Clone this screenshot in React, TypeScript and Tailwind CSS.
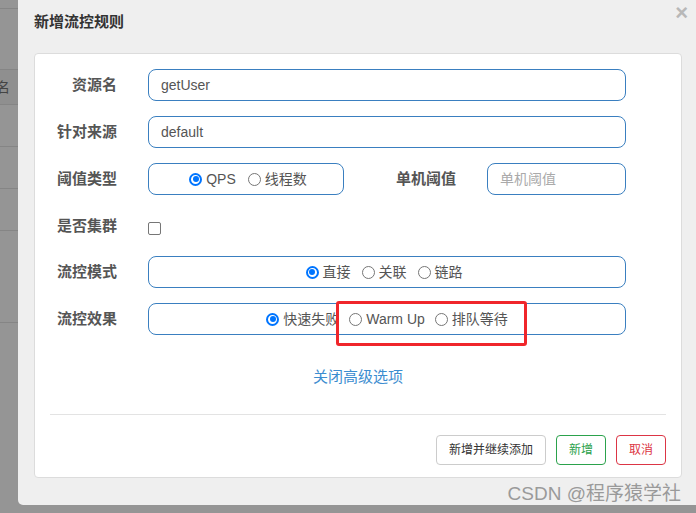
import React from 'react';

// Flow-control rule dialog (Sentinel dashboard), shown over a dimmed table.

const FONT = '"Liberation Sans", "Noto Sans CJK SC", sans-serif';

function Radio({ checked, label }: { checked?: boolean; label: string }) {
  return (
    <span className="flex items-center gap-[4px]">
      {checked ? (
        <span className="w-[13px] h-[13px] rounded-full border-2 border-[#0075ff] flex items-center justify-center">
          <span className="w-[6px] h-[6px] rounded-full bg-[#0075ff]" />
        </span>
      ) : (
        <span className="w-[13px] h-[13px] rounded-full border border-[#767676] bg-white" />
      )}
      <span>{label}</span>
    </span>
  );
}

function Label({ children }: { children: React.ReactNode }) {
  return <div className="w-[82px] text-right font-bold text-[#555] text-[15px]">{children}</div>;
}

const boxCls = 'h-[32px] rounded-[8px] border border-[#3a7fc0] bg-white';

export default function App() {
  return (
    <div className="relative w-[696px] h-[513px] bg-[#959595] flex overflow-hidden" style={{ fontFamily: FONT }}>
      {/* dimmed table behind the dialog */}
      <div className="w-[18px] flex flex-col text-[#444] text-[14px]">
        <div className="h-[9px] border-b border-[#858585]" />
        <div className="h-[61px] border-b border-[#858585]" />
        <div className="h-[35px] bg-[#8f8f8f] border-b border-[#858585] flex items-center overflow-hidden">
          <span className="-ml-[4px]">名</span>
        </div>
        <div className="h-[42px] border-b border-[#858585]" />
        <div className="h-[42px] border-b border-[#858585]" />
        <div className="h-[42px] border-b border-[#858585]" />
        <div className="h-[92px] border-b border-[#858585]" />
      </div>

      {/* dialog */}
      <div className="flex-1 h-[505px] bg-[#efefef] rounded-bl-[5px] flex flex-col pl-[16px] pr-[14px]">
        <div className="h-[53px] flex items-start justify-between">
          <h4 className="pt-[11px] text-[15px] font-bold text-[#333]">新增流控规则</h4>
          <span className="text-[#b8b8b8] text-[22px] font-bold leading-none mt-[2px] -mr-[6px]">×</span>
        </div>

        <div className="h-[425px] bg-white border border-[#dcdcdc] rounded-[4px] flex flex-col px-[15px]">
          <div className="flex flex-col gap-[15px] pt-[15px] text-[14px] text-[#555]">
            <div className="flex items-center gap-[31px] -ml-[15px]">
              <Label>资源名</Label>
              <div className={`${boxCls} w-[478px] flex items-center px-[12px]`}>getUser</div>
            </div>
            <div className="flex items-center gap-[31px] -ml-[15px]">
              <Label>针对来源</Label>
              <div className={`${boxCls} w-[478px] flex items-center px-[12px]`}>default</div>
            </div>
            <div className="flex items-center gap-[31px] -ml-[15px]">
              <Label>阈值类型</Label>
              <div className="flex items-center w-[478px]">
                <div className={`${boxCls} w-[196px] flex items-center justify-center gap-[12px] pl-[4px]`}>
                  <Radio checked label="QPS" />
                  <Radio label="线程数" />
                </div>
                <div className="w-[112px] text-right font-bold text-[15px]">单机阈值</div>
                <div className={`${boxCls} ml-[31px] flex-1 flex items-center px-[12px] text-[#aaa]`}>单机阈值</div>
              </div>
            </div>
            <div className="flex items-center gap-[31px] -ml-[15px] h-[32px]">
              <Label>是否集群</Label>
              <span className="w-[13px] h-[13px] mt-[4px] rounded-[2px] border border-[#767676] bg-white" />
            </div>
            <div className="flex items-center gap-[31px] -ml-[15px] -mt-[1px]">
              <Label>流控模式</Label>
              <div className={`${boxCls} w-[478px] flex items-center justify-center gap-[11px] pr-[6px]`}>
                <Radio checked label="直接" />
                <Radio label="关联" />
                <Radio label="链路" />
              </div>
            </div>
            <div className="flex items-center gap-[31px] -ml-[15px]">
              <Label>流控效果</Label>
              <div className={`${boxCls} w-[478px] flex items-center justify-center gap-[10px]`}>
                <Radio checked label="快速失败" />
                <div className="relative">
                  <Radio label="Warm Up" />
                  {/* red highlight box from the screenshot annotation */}
                  <div className="absolute -left-[13px] -top-[8px] w-[191px] h-[45px] border-[3px] border-[#f0262b] rounded-[3px]" />
                </div>
                <Radio label="排队等待" />
              </div>
            </div>
          </div>

          <div className="mt-[31px] text-center text-[15px] text-[#3c8dd0]">关闭高级选项</div>

          <div className="mt-[25px] border-t border-[#e3e3e3]" />

          <div className="mt-[20px] flex justify-end gap-[10px] text-[12px]">
            <button className="h-[30px] w-[110px] rounded-[4px] border border-[#cccccc] text-[#333] bg-white">新增并继续添加</button>
            <button className="h-[30px] w-[50px] rounded-[4px] border border-[#2ba24c] text-[#2ba24c] bg-white">新增</button>
            <button className="h-[30px] w-[50px] rounded-[4px] border border-[#dc3545] text-[#dc3545] bg-white">取消</button>
          </div>
        </div>
      </div>

      {/* watermark */}
      <div className="absolute right-[15px] bottom-[10px] text-[19px] leading-none text-[#9a9a9a]">
        CSDN @程序猿学社
      </div>
    </div>
  );
}
